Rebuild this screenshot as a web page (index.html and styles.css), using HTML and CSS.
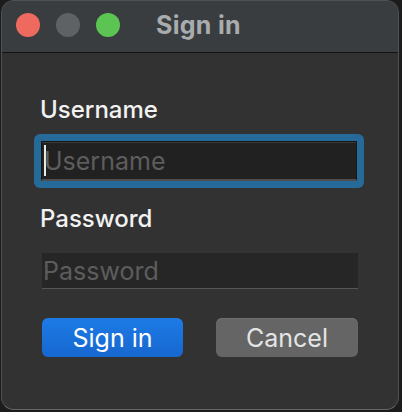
FILE: index.html
```html
<!DOCTYPE html>
<html>
<head>
<meta charset="utf-8">
<link rel="stylesheet" href="styles.css">
</head>
<body>
<div class="window">
  <div class="titlebar">
    <div class="lights">
      <span class="light red"></span>
      <span class="light gray"></span>
      <span class="light green"></span>
    </div>
    <div class="title">Sign in</div>
  </div>
  <div class="content">
    <div class="label">Username</div>
    <div class="ring">
      <div class="field field-focus"><span class="caret"></span><span class="ph">Username</span></div>
    </div>
    <div class="label label-pw">Password</div>
    <div class="field field-pw"><span class="ph">Password</span></div>
    <div class="buttons">
      <div class="btn btn-primary">Sign in</div>
      <div class="btn btn-secondary">Cancel</div>
    </div>
  </div>
</div>
</body>
</html>
```

FILE: styles.css
```css
html, body {
  margin: 0;
  padding: 0;
  background: #1c1c1c;
  width: 402px;
  height: 412px;
  overflow: hidden;
}
body {
  padding-left: 1px;
  font-family: "Inter", "Liberation Sans", sans-serif;
}
.window {
  width: 396px;
  height: 408px;
  background: #323232;
  border: 1px solid #4e5053;
  border-bottom-color: #666;
  border-radius: 13px;
  overflow: hidden;
  display: flex;
  flex-direction: column;
}
.titlebar {
  height: 51px;
  background: #3a3d3f;
  border-bottom: 1px solid #111;
  display: flex;
  align-items: center;
  padding-left: 14px;
  flex-shrink: 0;
}
.lights {
  display: flex;
  gap: 16px;
  margin-top: -4px;
}
.light {
  width: 24px;
  height: 24px;
  border-radius: 50%;
  display: block;
}
.red { background: #ee6a5f; }
.gray { background: #5f6265; }
.green { background: #5bc452; }
.title {
  margin-left: 36px;
  margin-top: -4px;
  font-size: 25px;
  font-weight: 700;
  color: #a9acae;
  letter-spacing: 0.3px;
}
.content {
  display: flex;
  flex-direction: column;
  padding-left: 40px;
  padding-top: 42px;
}
.label {
  font-size: 24px;
  line-height: 29px;
  font-weight: 500;
  color: #f2f2f2;
  margin-left: -2px;
}
.ring {
  margin-top: 10px;
  margin-left: -8px;
  width: 316px;
  padding: 7px;
  background: #266a9a;
  border-radius: 6px;
}
.field {
  box-sizing: border-box;
  width: 316px;
  display: flex;
  align-items: center;
  font-size: 25px;
  color: #5d5d5d;
}
.field-focus {
  height: 40px;
  background: #212121;
  border: 1px solid #151515;
  border-bottom: 2px solid #4d4d4d;
  box-shadow: inset 0 1px 0 #3a3a3a;
  padding-left: 2px;
}
.caret {
  display: block;
  width: 2px;
  height: 31px;
  background: #e8e8e8;
  margin-right: -2px;
}
.ph {
  line-height: 30px;
}
.label-pw {
  margin-top: 16px;
}
.field-pw {
  margin-top: 20px;
  height: 36px;
  background: #262626;
  border-bottom: 1px solid #555;
  padding-left: 1px;
}
.buttons {
  display: flex;
  gap: 33px;
  margin-top: 29px;
}
.btn {
  box-sizing: border-box;
  height: 39px;
  border-radius: 6px;
  display: flex;
  align-items: center;
  justify-content: center;
  font-size: 25px;
}
.btn-primary {
  width: 141px;
  background: linear-gradient(#1d7be6, #1767cf);
  color: #ffffff;
}
.btn-secondary {
  width: 142px;
  background: #656565;
  color: #e4e4e4;
  box-shadow: inset 0 1px 0 #707070;
}
```
